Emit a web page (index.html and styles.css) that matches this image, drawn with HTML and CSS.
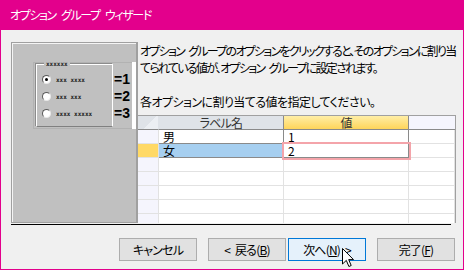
FILE: index.html
```html
<!DOCTYPE html>
<html lang="ja">
<head>
  <meta charset="UTF-8" />
  <title>オプション グループ ウィザード</title>
  <link rel="stylesheet" href="styles.css">
</head>
<body>
  <div class="window">
    <div class="titlebar">オプション グループ ウィザード</div>

    <div class="content">
      <div class="main">
        <div class="preview">
          <div class="optgroup">
            <div class="frame">
              <span class="legend">xxxxxx</span>
              <div class="opt"><span class="radio checked"></span><span class="dummy">xxx xxxx</span></div>
              <div class="opt"><span class="radio"></span><span class="dummy">xxx xxx</span></div>
              <div class="opt"><span class="radio"></span><span class="dummy">xxxx xxxxx</span></div>
            </div>
            <div class="values">
              <span>=1</span>
              <span>=2</span>
              <span>=3</span>
            </div>
            <div class="strip"></div>
          </div>
        </div>

        <div class="side">
          <p class="intro">オプション グループのオプションをクリックすると、そのオプションに割り当<br>てられている値が、オプション グループに設定されます。</p>
          <p class="intro gap">各オプションに割り当てる値を指定してください。</p>

          <div class="grid">
            <div class="c h corner"></div>
            <div class="c h">ラベル名</div>
            <div class="c h active">値</div>
            <div class="c h blank"></div>

            <div class="c sel data"></div>
            <div class="c data">男</div>
            <div class="c data">1</div>
            <div class="c"></div>

            <div class="c sel current data"></div>
            <div class="c data picked">女</div>
            <div class="c data editing">2</div>
            <div class="c"></div>

            <div class="c sel"></div><div class="c"></div><div class="c"></div><div class="c"></div>
            <div class="c sel"></div><div class="c"></div><div class="c"></div><div class="c"></div>
            <div class="c sel"></div><div class="c"></div><div class="c"></div><div class="c"></div>
            <div class="c sel"></div><div class="c"></div><div class="c"></div><div class="c"></div>
            <div class="c sel"></div><div class="c"></div><div class="c"></div><div class="c"></div>
          </div>
        </div>
      </div>

      <div class="rule"></div>

      <div class="buttons">
        <button class="btn">キャンセル</button>
        <button class="btn back">&lt; 戻る(<u>B</u>)</button>
        <button class="btn default">次へ(<u>N</u>) &gt;</button>
        <button class="btn finish">完了(<u>F</u>)</button>
      </div>
    </div>

    <svg class="cursor" width="13" height="20" viewBox="0 0 13 20">
      <path d="M0.5 0.5 L0.5 16 L4.3 12.4 L6.9 18.5 L9.2 17.5 L6.7 11.6 L11.5 11.6 Z" fill="#fff" stroke="#000" stroke-width="1" stroke-linejoin="miter"/>
    </svg>
  </div>
</body>
</html>
```

FILE: styles.css
```css
* {
  margin: 0;
  padding: 0;
  box-sizing: border-box;
}

body {
  font-family: "Noto Sans CJK JP", sans-serif;
  font-size: 12px;
  background: #f0f0f0;
  color: #000;
}

.window {
  position: relative;
  width: 464px;
  height: 270px;
  background: #f0f0f0;
  border: 1px solid #e3008c;
  border-top: none;
  overflow: hidden;
}

.titlebar {
  height: 30px;
  line-height: 30px;
  padding-left: 9px;
  background: #e3008c;
  color: #fff;
  font-feature-settings: "palt";
  letter-spacing: -1.4px;
  word-spacing: 4px;
}

.content {
  padding: 12px 7px 0 10px;
}

.main {
  display: flex;
  height: 181px;
}

/* left preview picture */
.preview {
  width: 127px;
  background: #c0c0c0;
  border: 1px solid #a0a0a0;
  border-right-width: 2px;
  box-shadow: inset 1px 1px 0 #f4f4f4;
  padding: 19px 0 0 21px;
  overflow: hidden;
}

.optgroup {
  display: flex;
  width: 104px;
  height: 67px;
  border: 1px solid #b2b2b2;
  padding: 1px 0 1px 2px;
  flex-shrink: 0;
}

.frame {
  position: relative;
  width: 77px;
  height: 63px;
  border: 1px solid #fff;
  border-bottom-color: #808080;
  box-shadow: -1px -1px 0 #8c8c8c;
  padding-top: 6px;
}

.legend {
  position: absolute;
  top: -5px;
  left: 7px;
  padding: 0 2px;
  background: #c0c0c0;
  font-family: "DejaVu Sans Mono", monospace;
  font-size: 6px;
  font-weight: bold;
  line-height: 8px;
  color: #222;
}

.opt {
  display: flex;
  align-items: center;
  height: 17px;
  padding-left: 5px;
  gap: 5px;
}

.radio {
  position: relative;
  width: 9px;
  height: 9px;
  border-radius: 50%;
  background: #fff;
  border: 1px solid #5a5a5a;
  border-right-color: #e8e8e8;
  border-bottom-color: #e8e8e8;
}

.radio.checked::after {
  content: "";
  position: absolute;
  left: 2px;
  top: 2px;
  width: 3px;
  height: 3px;
  border-radius: 50%;
  background: #000;
}

.dummy {
  font-family: "DejaVu Sans Mono", monospace;
  font-size: 6px;
  font-weight: bold;
  color: #1a1a1a;
  white-space: nowrap;
}

.values {
  width: 19px;
  padding-top: 7px;
  display: flex;
  flex-direction: column;
}

.values span {
  height: 17px;
  line-height: 17px;
  font-family: "Liberation Sans", Arial, sans-serif;
  font-size: 14px;
  font-weight: bold;
  padding-left: 1px;
}

.strip {
  width: 4px;
  margin: -2px 0;
  background: #fff;
}

/* right column */
.side {
  flex: 1;
  display: flex;
  flex-direction: column;
  min-width: 0;
}

.intro {
  padding-left: 2px;
  line-height: 17px;
  white-space: nowrap;
  font-feature-settings: "palt";
  letter-spacing: -1.72px;
  word-spacing: 3px;
}

.intro.gap {
  margin-top: 17px;
  letter-spacing: -0.55px;
}

.grid {
  margin-top: 5px;
  flex: 1;
  display: grid;
  grid-template-columns: 21px 125px 125px 1fr;
  grid-auto-rows: 14px;
  align-content: start;
  background: #fff;
  border-top: 1px solid #a0a0a0;
  border-right: 1px solid #a0a0a0;
  overflow: hidden;
}

.c {
  border-right: 1px solid #e2e2e2;
  border-bottom: 1px solid #e2e2e2;
  padding-left: 4px;
  font-size: 12px;
  line-height: 13px;
  white-space: nowrap;
}

.h {
  background: #dfe3e8;
  border-color: #8a8a8a;
  text-align: center;
  padding-left: 0;
  color: #333;
  font-feature-settings: "palt";
  letter-spacing: -0.8px;
}

.h.corner {
  background: linear-gradient(135deg, #dfe3e8 55%, #eceff3 56%);
  border-right-color: #dfe3e8;
}

.h.active {
  background: linear-gradient(#ffeea6, #ffd55a);
}

.h.blank {
  background: #f5f5fd;
  border-right: none;
}

.sel {
  background: #f5f5fd;
}

.data {
  border-color: #8a8a8a;
}

.sel.data {
  border-color: #e2e2e2;
}

.sel.current {
  background: #ffd966;
}

.picked {
  background: #a6cff0;
}

.editing {
  position: relative;
  box-shadow: 0 0 0 2px #f4a4aa;
  z-index: 1;
}

.rule {
  height: 1px;
  margin: 1px 5px 0 0;
  background: #000;
}

.buttons {
  display: flex;
  justify-content: flex-end;
  margin-top: 13px;
  padding-right: 1px;
}

.btn {
  width: 78px;
  height: 23px;
  background: #e1e1e1;
  border: 1px solid #adadad;
  font-family: "Noto Sans CJK JP", sans-serif;
  font-size: 12px;
  color: #000;
  font-feature-settings: "palt";
  letter-spacing: -0.8px;
  word-spacing: 3px;
}

.btn.back {
  margin-left: 11px;
}

.btn.default {
  margin-left: 2px;
  background: #e5f1fb;
  border-color: #0078d7;
}

.btn.finish {
  margin-left: 11px;
}

.cursor {
  position: absolute;
  left: 341px;
  top: 248px;
}
```
